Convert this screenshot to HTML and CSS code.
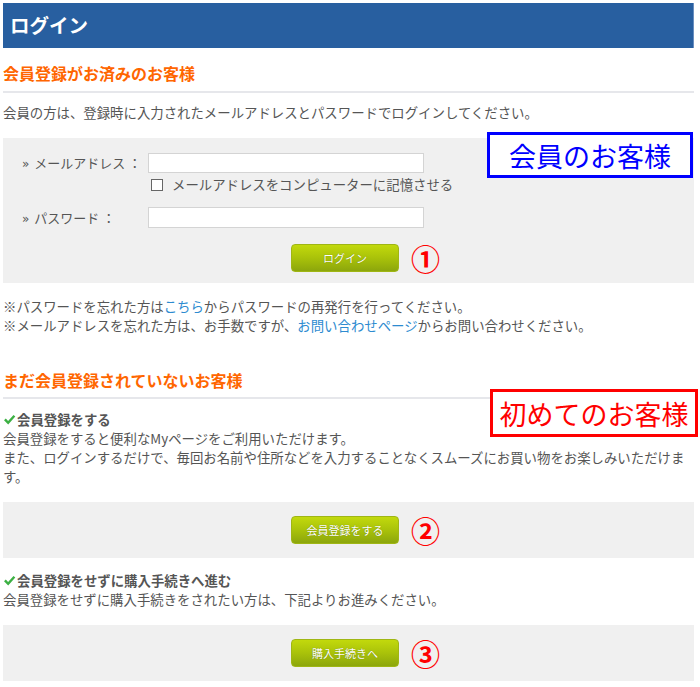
FILE: index.html
```html
<!DOCTYPE html>
<html lang="ja">
<head>
<meta charset="utf-8">
<title>ログイン</title>
<link rel="stylesheet" href="styles.css">
</head>
<body>
<div class="page">
  <h1 class="title">ログイン</h1>

  <h2 class="sec-head">会員登録がお済みのお客様</h2>
  <p class="lead">会員の方は、登録時に入力されたメールアドレスとパスワードでログインしてください。</p>

  <div class="login-box">
    <div class="form-row">
      <div class="label"><span class="raquo">»</span>メールアドレス ：</div>
      <div class="field">
        <span class="input"></span>
        <label class="remember"><span class="cbox"></span>メールアドレスをコンピューターに記憶させる</label>
      </div>
    </div>
    <div class="form-row pw">
      <div class="label"><span class="raquo">»</span>パスワード ：</div>
      <div class="field"><span class="input pw-input"></span></div>
    </div>
    <div class="btn-row">
      <span class="btn">ログイン<span class="num">①</span></span>
    </div>
    <div class="note note-blue">会員のお客様</div>
  </div>

  <div class="notes">
    <p>※パスワードを忘れた方は<a class="link">こちら</a>からパスワードの再発行を行ってください。</p>
    <p>※メールアドレスを忘れた方は、お手数ですが、<a class="link">お問い合わせページ</a>からお問い合わせください。</p>
  </div>

  <div class="guest">
    <h2 class="sec-head sec-head2">まだ会員登録されていないお客様</h2>
    <div class="note note-red">初めてのお客様</div>

    <div class="item">
      <h3 class="item-head"><svg class="check" viewBox="0 0 12 12" width="13" height="12"><path d="M0.5 6.2 L2.3 4.6 L4.6 6.9 L10 1 L11.8 2.4 L4.7 10.6 Z" fill="#3cb043"/></svg>会員登録をする</h3>
      <p class="text">会員登録をすると便利なMyページをご利用いただけます。<br>また、ログインするだけで、毎回お名前や住所などを入力することなくスムーズにお買い物をお楽しみいただけます。</p>
      <div class="action-box"><span class="btn">会員登録をする<span class="num">②</span></span></div>
    </div>

    <div class="item">
      <h3 class="item-head"><svg class="check" viewBox="0 0 12 12" width="13" height="12"><path d="M0.5 6.2 L2.3 4.6 L4.6 6.9 L10 1 L11.8 2.4 L4.7 10.6 Z" fill="#3cb043"/></svg>会員登録をせずに購入手続きへ進む</h3>
      <p class="text">会員登録をせずに購入手続きをされたい方は、下記よりお進みください。</p>
      <div class="action-box"><span class="btn">購入手続きへ<span class="num">③</span></span></div>
    </div>
  </div>
</div>
</body>
</html>
```

FILE: styles.css
```css
* { box-sizing: border-box; }
html, body { margin: 0; padding: 0; background: #fff; }
body {
  font-family: "Noto Sans CJK JP", "Noto Sans", sans-serif;
  color: #555;
  font-size: 13.4px;
  line-height: 19px;
}
.page {
  width: 700px;
  padding: 3px 6px 0 3px;
  position: relative;
}
.title {
  margin: 0;
  height: 45px;
  background: #285fa0;
  border-right: 1px solid #6a8fc0;
  color: #fff;
  font-size: 19.5px;
  font-weight: bold;
  line-height: 44px;
  padding-left: 7px;
}
.sec-head {
  margin: 14px 0 0;
  color: #ff6600;
  font-size: 16px;
  font-weight: bold;
  line-height: 22px;
  padding-bottom: 7px;
  border-bottom: 2px solid #e6e7eb;
}
.lead { margin: 10px 0 0; }
.login-box {
  position: relative;
  margin-top: 16px;
  height: 145px;
  background: #f0f0f0;
  padding: 15px 0 0 17px;
}
.form-row { display: flex; }
.label {
  width: 128px;
  font-size: 13px;
  line-height: 20px;
  color: #555;
  padding-left: 2px;
}
.raquo {
  font-family: "DejaVu Sans", sans-serif;
  font-size: 12px;
  margin-right: 5px;
}
.field { display: flex; flex-direction: column; }
.input {
  display: block;
  width: 276px;
  height: 20px;
  background: #fff;
  border: 1px solid #d4d4d4;
}
.pw { margin-top: 13px; }
.pw .label { line-height: 21px; }
.pw-input { height: 21px; }
.remember {
  display: flex;
  align-items: center;
  margin-top: 2px;
  height: 19px;
  color: #555;
}
.cbox {
  width: 12px;
  height: 12px;
  border: 1px solid #666;
  background: #fff;
  margin: 0 9px 0 3px;
}
.btn-row {
  display: flex;
  justify-content: center;
  margin-top: 14px;
  padding-right: 24px;
}
.btn {
  position: relative;
  display: inline-flex;
  align-items: center;
  justify-content: center;
  width: 108px;
  height: 28px;
  border-radius: 4px;
  border: 1px solid #9fb614;
  background: linear-gradient(to bottom, #c2d90c 0%, #a9c20a 50%, #8ca60c 100%);
  color: #fff;
  font-size: 11px;
  line-height: 1;
  text-shadow: 0 0 1px rgba(60, 80, 0, 0.6);
}
.num {
  position: absolute;
  left: 119px;
  top: 50%;
  transform: translateY(-50%);
  color: #ff0000;
  font-size: 29px;
  line-height: 1;
  text-shadow: none;
  font-family: "Noto Sans CJK JP", sans-serif;
  font-weight: bold;
}
.note {
  position: absolute;
  background: #fff;
  font-size: 27px;
  line-height: 1;
  display: flex;
  align-items: center;
  justify-content: center;
}
.note-blue {
  left: 484px;
  top: -6px;
  width: 206px;
  height: 46px;
  border: 3px solid #0000ff;
  color: #0000ff;
}
.note-red {
  left: 487px;
  top: 20px;
  width: 208px;
  height: 48px;
  border: 3px solid #ff0000;
  color: #ff0000;
}
.notes { margin-top: 14px; }
.notes p { margin: 0; }
.link { color: #2d8bd0; text-decoration: none; }
.guest { position: relative; }
.sec-head2 { margin-top: 34px; padding-bottom: 6px; }
.item-head {
  margin: 11px 0 0;
  font-size: 13.4px;
  font-weight: bold;
  line-height: 19px;
  color: #555;
  display: flex;
  align-items: center;
}
.check { margin-right: 1px; }
.text { margin: 0; }
.action-box {
  margin-top: 16px;
  height: 56px;
  background: #f0f0f0;
  display: flex;
  align-items: center;
  justify-content: center;
  padding-right: 7px;
}
.item + .item .item-head { margin-top: 13px; }
```
